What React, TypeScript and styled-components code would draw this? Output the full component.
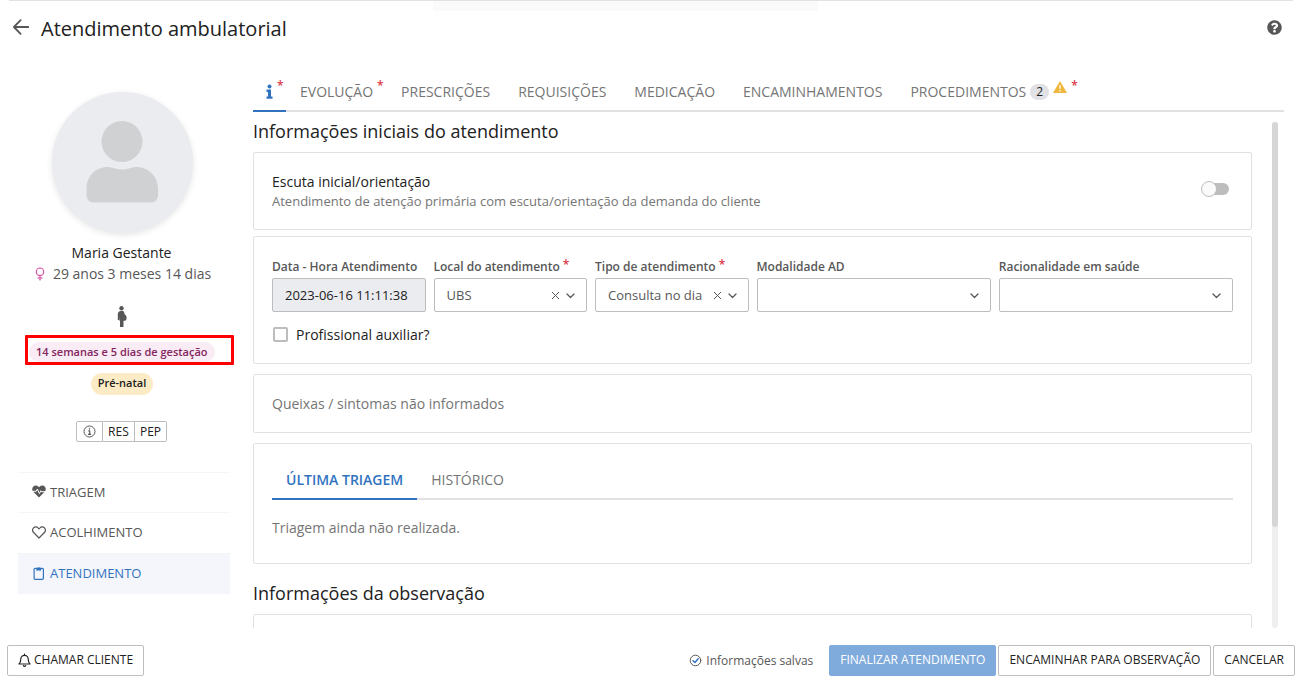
import React from "react";
import styled, { createGlobalStyle, css } from "styled-components";

const colors = {
  text: "#212121",
  medium: "#575757",
  muted: "#757575",
  blue: "#3273bf",
  border: "#e1e1e3",
  control: "#bdbdbd",
  red: "#dc3545",
};

const GlobalStyle = createGlobalStyle`
  *, *::before, *::after { box-sizing: border-box; }
  body { margin: 0; background: #fff; color: ${colors.text}; font: 14px/20px "Open Sans", sans-serif; }
  button, input, select { font-family: inherit; margin: 0; }
  h1, h2, p { margin: 0; font-weight: 400; }
  a { color: inherit; text-decoration: none; }
`;

const Page = styled.div`
  display: flex;
  flex-direction: column;
  height: 100vh;
  overflow: hidden;
`;

const TopRule = styled.div`
  position: relative;
  height: 1px;
  margin: 0 12px 0 9px;
  background: #e1e1e6;
`;

const TopNotch = styled.div`
  position: absolute;
  top: 1px;
  left: 33%;
  right: 37%;
  height: 10px;
  background: #fafafa;
`;

const Header = styled.header`
  display: flex;
  align-items: center;
  height: 52px;
  padding: 0 23px 0 12px;
`;

const IconButton = styled.button`
  display: flex;
  padding: 0;
  border: 0;
  background: none;
  color: ${colors.medium};
`;

const Title = styled.h1`
  flex: 1;
  padding: 4px 0 0 11px;
  font-size: 20px;
  line-height: 28px;
`;

const Body = styled.div`
  display: flex;
  flex: 1;
  min-height: 0;
  padding: 19px 21px 0 18px;
  gap: 23px;
`;

const Sidebar = styled.aside`
  display: flex;
  flex-direction: column;
  align-items: center;
  width: 212px;
  flex-shrink: 0;
  padding-top: 20px;
`;

const Avatar = styled.div`
  display: flex;
  width: 141px;
  height: 141px;
  margin-right: 3px;
  border-radius: 50%;
  background: #ebecf0;
  box-shadow: 0 2px 6px rgba(0, 0, 0, 0.1);
`;

const PatientName = styled.p`
  margin-top: 10px;
  margin-right: 5px;
`;

const PatientAge = styled.p`
  display: flex;
  align-items: center;
  gap: 8px;
  margin-top: 1px;
  margin-right: 2px;
  color: ${colors.medium};
`;

const Pregnant = styled.div`
  display: flex;
  margin: 22px 5px 7px 0;
  color: ${colors.medium};
`;

const Highlight = styled.div`
  align-self: flex-start;
  width: 209px;
  height: 30px;
  margin-left: 7px;
  padding: 3px 1px;
  border: 3px solid #f00;
  border-radius: 1px;
  flex-shrink: 0;
`;

const Tag = styled.span<{ $tone: "pink" | "yellow" }>`
  display: inline-block;
  border-radius: 11px;
  font-size: 11px;
  font-weight: 600;
  ${(p) =>
    p.$tone === "pink"
      ? css`
          padding: 0 7px;
          line-height: 20px;
          background: #faecf4;
          color: #832561;
        `
      : css`
          margin: 8px 4px 0 0;
          padding: 0 7px 2px;
          line-height: 20px;
          background: #fcebc5;
        `}
`;

const ButtonGroup = styled.div`
  display: flex;
  margin-top: 26px;
  margin-right: 5px;
`;

const SmallButton = styled.button`
  display: flex;
  align-items: center;
  justify-content: center;
  min-width: 32px;
  height: 21px;
  padding: 0 5px;
  border: 1px solid ${colors.control};
  background: #fff;
  color: ${colors.text};
  font-size: 12px;
  & + & { border-left: 0; }
  &:first-child { min-width: 27px; border-radius: 2px 0 0 2px; color: ${colors.medium}; }
  &:last-child { border-radius: 0 2px 2px 0; }
`;

const Menu = styled.nav`
  width: 100%;
  margin-top: 30px;
`;

const MenuItem = styled.a<{ $active?: boolean }>`
  display: flex;
  align-items: center;
  gap: 4px;
  height: 41px;
  padding: 0 0 2px 14px;
  border-top: 1px solid #f4f5f7;
  font-size: 13px;
  background: ${(p) => (p.$active ? "#f4f6fb" : "#fff")};
  color: ${(p) => (p.$active ? colors.blue : colors.medium)};
  &:first-child { height: 40px; }
`;

const Main = styled.main`
  display: flex;
  flex-direction: column;
  flex: 1;
  min-width: 0;
`;

const Tabs = styled.div`
  display: flex;
  flex-shrink: 0;
  height: 40px;
  border-bottom: 2px solid ${colors.border};
`;

const Tab = styled.button<{ $active?: boolean }>`
  display: flex;
  align-items: center;
  height: 40px;
  padding: 0 14px;
  border: 0;
  border-bottom: 2px solid ${(p) => (p.$active ? colors.blue : "transparent")};
  background: none;
  color: ${(p) => (p.$active ? colors.blue : colors.muted)};
  font-size: 14px;
  font-weight: ${(p) => (p.$active ? 600 : 400)};
  white-space: nowrap;
`;

const IconTab = styled(Tab)`
  padding: 0 13px;
`;

const Star = styled.span`
  align-self: flex-start;
  padding-left: 3px;
  color: ${colors.red};
  font-size: 12px;
  font-weight: 600;
`;

/* The mark hangs into the tab's right padding, so it adds no width. */
const TabStar = styled(Star)`
  width: 10px;
  margin-right: -10px;
  padding: 5px 0 0 4px;
`;

const Count = styled.span`
  min-width: 19px;
  margin: 2px 4px 0;
  border-radius: 8px;
  background: #e1e1e6;
  color: ${colors.text};
  font-size: 12px;
  line-height: 16px;
  text-align: center;
`;

const WarnIcon = styled.span`
  display: flex;
  margin-bottom: 8px;
`;

const ScrollArea = styled.div`
  display: flex;
  flex: 1;
  min-height: 0;
  gap: 20px;
  padding-right: 6px;
`;

const Content = styled.div`
  flex: 1;
  min-width: 0;
  overflow: hidden;
`;

const ScrollTrack = styled.div`
  width: 6px;
  margin-top: 10px;
  border-radius: 3px;
  background: #efefef;
`;

const ScrollThumb = styled.div`
  height: 80%;
  border-radius: 3px;
  background: #d6d6d6;
`;

const SectionTitle = styled.h2`
  padding-bottom: 2px;
  font-size: 18px;
  line-height: 38px;
`;

const Panel = styled.section<{ $gap?: number }>`
  margin-bottom: ${(p) => p.$gap ?? 10}px;
  padding: 18px;
  border: 1px solid ${colors.border};
  border-radius: 2px;
`;

const SwitchRow = styled.label`
  display: flex;
  align-items: center;
  justify-content: space-between;
  padding-right: 4px;
  line-height: 22px;
`;

const SwitchHint = styled.span`
  display: block;
  padding-bottom: 2px;
  color: ${colors.muted};
  font-size: 13px;
  line-height: 16px;
`;

const Switch = styled.input`
  appearance: none;
  position: relative;
  width: 26px;
  height: 12px;
  margin-bottom: 4px;
  border-radius: 6px;
  background: ${colors.control};
  &::before {
    content: "";
    position: absolute;
    top: -2px;
    left: -2px;
    width: 16px;
    height: 16px;
    border: 1px solid ${colors.control};
    border-radius: 50%;
    background: #fafafa;
  }
`;

const Fields = styled.div`
  display: grid;
  grid-template-columns: repeat(12, 1fr);
  gap: 8px;
`;

const Field = styled.div<{ $span: number }>`
  grid-column: span ${(p) => p.$span};
  min-width: 0;
`;

const Label = styled.label`
  display: flex;
  height: 23px;
  color: ${colors.medium};
  font-size: 12px;
  font-weight: 600;
  line-height: 24px;
  white-space: nowrap;
`;

const LabelStar = styled(Star)`
  line-height: 20px;
`;

const control = css`
  display: block;
  width: 100%;
  height: 34px;
  padding: 0 12px;
  border: 1px solid ${colors.control};
  border-radius: 2px;
  font-size: 13px;
`;

const TextInput = styled.input`
  ${control}
  background: #ebecf0;
  color: ${colors.text};
`;

const SelectBox = styled.div`
  position: relative;
`;

const Select = styled.select`
  ${control}
  appearance: none;
  background: #fff;
  color: ${colors.medium};
`;

const SelectIcons = styled.div`
  position: absolute;
  top: 0;
  right: 11px;
  display: flex;
  align-items: center;
  gap: 5px;
  height: 34px;
  color: ${colors.medium};
  pointer-events: none;
`;

const CheckRow = styled.label`
  display: flex;
  align-items: center;
  gap: 8px;
  padding: 13px 0 0 1px;
`;

const Checkbox = styled.input`
  appearance: none;
  width: 15px;
  height: 15px;
  border: 2px solid ${colors.control};
  border-radius: 2px;
  && { margin-bottom: 2px; }
`;

const Muted = styled.p`
  color: ${colors.muted};
  line-height: 21px;
`;

const InnerTabs = styled(Tabs)`
  margin-bottom: 17px;
  margin-top: -2px;
`;

const TabBody = styled.div`
  padding-bottom: 7px;
`;

const Footer = styled.footer`
  display: flex;
  align-items: flex-start;
  gap: 2px;
  height: 55px;
  padding: 17px 10px 0 7px;
  flex-shrink: 0;
`;

const Button = styled.button<{ $primary?: boolean }>`
  display: flex;
  align-items: center;
  gap: 3px;
  height: 31px;
  padding: 0 10px 2px;
  border: 1px solid ${(p) => (p.$primary ? "#7fabdc" : colors.control)};
  border-radius: 2px;
  background: ${(p) => (p.$primary ? "#7fabdc" : "#fff")};
  color: ${(p) => (p.$primary ? "#fff" : colors.text)};
  font-size: 12px;
  white-space: nowrap;
`;

const Saved = styled.div`
  display: flex;
  align-items: center;
  gap: 4px;
  height: 31px;
  margin-left: auto;
  padding-right: 14px;
  color: ${colors.medium};
  font-size: 12px;
`;

const stroke = { fill: "none", stroke: "currentColor", strokeLinecap: "round", strokeLinejoin: "round" } as const;

const Cross = () => (
  <svg width="9" height="9" viewBox="0 0 9 9" {...stroke} strokeLinecap="butt"><path d="M1 1l7 7M8 1l-7 7" /></svg>
);
const Chevron = () => (
  <svg width="11" height="9" viewBox="0 0 11 9" {...stroke} strokeWidth="1.3"><path d="M2 3l3.5 3.5L9 3" /></svg>
);

type SelectFieldProps = { id: string; label: string; value?: string; required?: boolean; span: number };

const SelectField = ({ id, label, value = "", required, span }: SelectFieldProps) => (
  <Field $span={span}>
    <Label htmlFor={id}>{label}{required && <LabelStar>*</LabelStar>}</Label>
    <SelectBox>
      <Select id={id} defaultValue={value}><option value={value}>{value}</option></Select>
      <SelectIcons>{value && <Cross />}<Chevron /></SelectIcons>
    </SelectBox>
  </Field>
);

export default function App() {
  return (
    <>
      <GlobalStyle />
      <Page>
        <TopRule><TopNotch /></TopRule>
        <Header>
          <IconButton aria-label="Voltar">
            <svg width="18" height="18" viewBox="0 0 18 18" {...stroke} strokeWidth="1.8"><path d="M16.3 9H2M8.6 2.200L1.900 9l6.700 6.800" /></svg>
          </IconButton>
          <Title>Atendimento ambulatorial</Title>
          <IconButton aria-label="Ajuda">
            <svg width="15" height="15" viewBox="0 0 512 512" fill="currentColor"><path d="M504 256c0 137-111 248-248 248S8 393 8 256 119 8 256 8s248 111 248 248zM262.700 90c-54.500 0-89.300 23-116.500 63.800-3.500 5.300-2.400 12.400 2.700 16.300l34.700 26.300c5.200 3.900 12.600 3 16.700-2.100 17.900-22.700 30.100-35.800 57.300-35.800 20.400 0 45.700 13.100 45.700 33 0 15-12.400 22.700-32.500 34C247 238.500 216 255 216 296v4c0 6.600 5.400 12 12 12h56c6.600 0 12-5.400 12-12v-1.300c0-28.800 84-30 84-107.900C380 132 319 90 262.700 90zM256 338c-25.400 0-46 20.600-46 46s20.600 46 46 46 46-20.600 46-46-20.600-46-46-46z" /></svg>
          </IconButton>
        </Header>

        <Body>
          <Sidebar>
            <Avatar>
              <svg width="141" height="141" viewBox="0 0 141 141" fill="#d0d1d3">
                <circle cx="70" cy="49.500" r="20.500" />
                <path d="M34.500 96.500c0-12 9-21.500 21-21.500 5 0 7.500 2.500 14.500 2.500S79.500 75 84.500 75c12 0 21.500 9.500 21.500 21.500v7a7 7 0 0 1-7 7H41.500a7 7 0 0 1-7-7z" />
              </svg>
            </Avatar>
            <PatientName>Maria Gestante</PatientName>
            <PatientAge>
              <svg width="10" height="14" viewBox="0 0 10 14" fill="none" stroke="#d9469f" strokeWidth="1.100"><circle cx="5" cy="4.700" r="3.700" /><path d="M5 8.500v5M2.500 11h5" /></svg>
              29 anos 3 meses 14 dias
            </PatientAge>
            <Pregnant>
              <svg width="10" height="22" viewBox="0 0 10 22" fill="currentColor"><circle cx="4.500" cy="2.200" r="2.200" /><path d="M3.700 5h1.800c1 0 1.500.6 1.700 1.500l.4 1.700C9 9 9.600 10.200 9.600 12c0 1.700-.6 2.700-1.700 2.700H6.500V21H3v-6.300H2.300V11L2 14H.8V8.500C.8 6.200 2 5 3.700 5z" /></svg>
            </Pregnant>
            <Highlight><Tag $tone="pink">14 semanas e 5 dias de gestação</Tag></Highlight>
            <Tag $tone="yellow">Pré-natal</Tag>
            <ButtonGroup>
              <SmallButton aria-label="Informações">
                <svg width="13" height="13" viewBox="0 0 13 13" {...stroke} strokeLinecap="butt"><circle cx="6.500" cy="6.500" r="5.500" /><path d="M5.300 5.800h1.400v3.400M5 9.300h3.200" strokeWidth="1.200" /><circle cx="6.500" cy="3.800" r=".5" fill="currentColor" strokeWidth=".6" /></svg>
              </SmallButton>
              <SmallButton>RES</SmallButton>
              <SmallButton>PEP</SmallButton>
            </ButtonGroup>
            <Menu>
              <MenuItem href="#triagem">
                <svg width="14" height="13" viewBox="0 0 14 13"><path d="M7 12.500L1.300 6.700C-.2 5-.1 2.700 1.300 1.400 2.800 0 5 .2 6.300 1.600l.7.700.7-.7C9 .2 11.200 0 12.700 1.400c1.400 1.300 1.500 3.600 0 5.300z" fill="currentColor" /><path d="M1 6.300h3.200L5.400 4l2 4.600 1.400-2.900.5 1H13" fill="none" stroke="#fff" strokeWidth="1" /></svg>
                TRIAGEM
              </MenuItem>
              <MenuItem href="#acolhimento">
                <svg width="14" height="13" viewBox="0 0 14 13" {...stroke} strokeWidth="1.200"><path d="M7 12L1.600 6.500C.3 5 .4 3 1.600 1.800 2.900.6 4.900.7 6 1.900l1 1 1-1c1.100-1.200 3.100-1.300 4.400-.1 1.200 1.200 1.300 3.200 0 4.700z" /></svg>
                ACOLHIMENTO
              </MenuItem>
              <MenuItem href="#atendimento" $active>
                <svg width="14" height="14" viewBox="0 0 14 14" {...stroke} strokeWidth="1.200"><rect x="2.100" y="2.300" width="9.300" height="11" rx="1" /><path d="M4.500 4.200V2.300h1.100a1.200 1.200 0 0 1 2.300 0H9v1.900z" fill="currentColor" strokeWidth=".4" /></svg>
                ATENDIMENTO
              </MenuItem>
            </Menu>
          </Sidebar>

          <Main>
            <Tabs>
              <IconTab $active aria-label="Informações">
                <svg width="7" height="15" viewBox="9 0 7 15" fill="currentColor"><circle cx="12.500" cy="2.500" r="2" /><path d="M9.500 5.500H14v7h1.500v2.300h-6v-2.300H11V8H9.500z" /></svg>
                <TabStar>*</TabStar>
              </IconTab>
              <Tab>EVOLUÇÃO<TabStar>*</TabStar></Tab>
              <Tab>PRESCRIÇÕES</Tab>
              <Tab>REQUISIÇÕES</Tab>
              <Tab>MEDICAÇÃO</Tab>
              <Tab>ENCAMINHAMENTOS</Tab>
              <Tab>
                PROCEDIMENTOS<Count>2</Count>
                <WarnIcon><svg width="14" height="12" viewBox="0 0 14 12"><path d="M7 0l7 12H0z" fill="#efb73e" /><path d="M7 4.200v3.600M7 9v1.400" stroke="#fff" strokeWidth="1.300" /></svg></WarnIcon>
                <TabStar>*</TabStar>
              </Tab>
            </Tabs>
            <ScrollArea>
              <Content>
                <SectionTitle>Informações iniciais do atendimento</SectionTitle>
                <Panel $gap={6}>
                  <SwitchRow>
                    <span>Escuta inicial/orientação<SwitchHint>Atendimento de atenção primária com escuta/orientação da demanda do cliente</SwitchHint></span>
                    <Switch type="checkbox" role="switch" />
                  </SwitchRow>
                </Panel>
                <Panel>
                  <Fields>
                    <Field $span={2}>
                      <Label htmlFor="data">Data - Hora Atendimento</Label>
                      <TextInput id="data" readOnly value="2023-06-16 11:11:38" />
                    </Field>
                    <SelectField id="local" label="Local do atendimento" value="UBS" required span={2} />
                    <SelectField id="tipo" label="Tipo de atendimento" value="Consulta no dia" required span={2} />
                    <SelectField id="modalidade" label="Modalidade AD" span={3} />
                    <SelectField id="racionalidade" label="Racionalidade em saúde" span={3} />
                  </Fields>
                  <CheckRow><Checkbox type="checkbox" />Profissional auxiliar?</CheckRow>
                </Panel>
                <Panel><Muted>Queixas / sintomas não informados</Muted></Panel>
                <Panel>
                  <InnerTabs>
                    <Tab $active>ÚLTIMA TRIAGEM</Tab>
                    <Tab>HISTÓRICO</Tab>
                  </InnerTabs>
                  <TabBody><Muted>Triagem ainda não realizada.</Muted></TabBody>
                </Panel>
                <SectionTitle>Informações da observação</SectionTitle>
                <Panel />
              </Content>
              <ScrollTrack><ScrollThumb /></ScrollTrack>
            </ScrollArea>
          </Main>
        </Body>

        <Footer>
          <Button>
            <svg width="13" height="14" viewBox="0 0 13 14" {...stroke} strokeWidth="1.200"><path d="M1 11h11c-1.500-1.400-1.800-2.500-1.800-5a3.700 3.700 0 0 0-7.400 0c0 2.500-.3 3.600-1.800 5zM6.500 1v1.300M5.300 12.700c.6.800 1.800.8 2.400 0" /></svg>
            CHAMAR CLIENTE
          </Button>
          <Saved>
            <svg width="13" height="13" viewBox="0 0 13 13" {...stroke}><circle cx="6.500" cy="6.500" r="5.300" stroke={colors.medium} /><path d="M4 6.700l1.900 1.800L9.200 4.800" stroke={colors.blue} strokeWidth="1.500" /></svg>
            Informações salvas
          </Saved>
          <Button $primary>FINALIZAR ATENDIMENTO</Button>
          <Button>ENCAMINHAR PARA OBSERVAÇÃO</Button>
          <Button>CANCELAR</Button>
        </Footer>
      </Page>
    </>
  );
}
